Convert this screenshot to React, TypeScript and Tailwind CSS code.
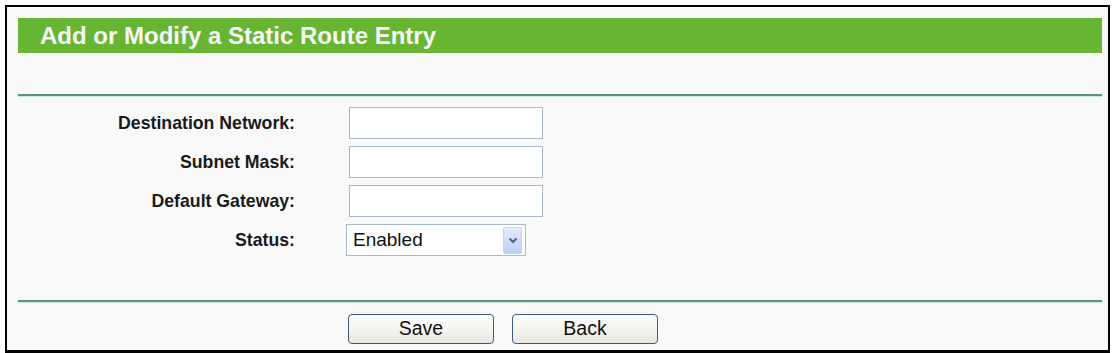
import React from 'react';

const font = { fontFamily: '"Liberation Sans", Arial, sans-serif' };

const rows = ['Destination Network:', 'Subnet Mask:', 'Default Gateway:'];

const Label: React.FC<{ text: string }> = ({ text }) => (
  <div className="w-[277px] shrink-0 text-right text-[17.7px] font-bold text-[#1a1a1a]">{text}</div>
);

export default function App() {
  return (
    <div className="h-[353px] w-[1112px] overflow-hidden bg-white" style={font}>
      <div className="ml-[5px] mt-[5px] h-[348px] w-[1105px] border-2 border-b-[3px] border-black bg-[#f9f9f9] pl-[11px] pr-[6px] pt-[11px]">
        <div className="flex h-[35px] w-[1084px] items-center bg-[#68b534] pl-[22px] text-[24px] font-bold text-[#f7f7f7]">
          Add or Modify a Static Route Entry
        </div>
        <div className="mt-[41px] h-[3px] w-[1084px] border-t-2 border-[#5b957a] bg-[#cfe6da]" />
        <div className="mt-[10px] flex flex-col gap-[7px]">
          {rows.map((r) => (
            <div key={r} className="flex h-[32px] items-center">
              <Label text={r} />
              <input
                type="text"
                className="ml-[54px] h-[32px] w-[194px] border border-[#a9b8cb] bg-white outline-none"
              />
            </div>
          ))}
          <div className="flex h-[32px] items-center">
            <Label text="Status:" />
            <div className="ml-[51px] flex h-[32px] w-[180px] items-center justify-between border border-[#a9b8cb] bg-white pl-[6px] pr-[3px] text-[19px] text-[#111]">
              <span>Enabled</span>
              <span className="flex h-[27px] w-[19px] items-center justify-center rounded-[2px] border border-[#c3d3f0] bg-gradient-to-b from-[#e3ecfd] to-[#bccff5]">
                <svg width="10" height="7" viewBox="0 0 10 7">
                  <path d="M1.5 1.5 L5 5 L8.5 1.5" fill="none" stroke="#4d6185" strokeWidth="2" />
                </svg>
              </span>
            </div>
          </div>
        </div>
        <div className="mt-[44px] h-[3px] w-[1084px] border-t-2 border-[#5b957a] bg-[#cfe6da]" />
        <div className="mt-[11px] flex gap-[18px] pl-[330px]">
          {['Save', 'Back'].map((b) => (
            <button
              key={b}
              className="h-[30px] w-[146px] rounded-[4px] border border-[#3f5a78] bg-gradient-to-b from-white to-[#e9e9e2] text-[19.5px] leading-none text-[#111]"
            >
              {b}
            </button>
          ))}
        </div>
      </div>
    </div>
  );
}
